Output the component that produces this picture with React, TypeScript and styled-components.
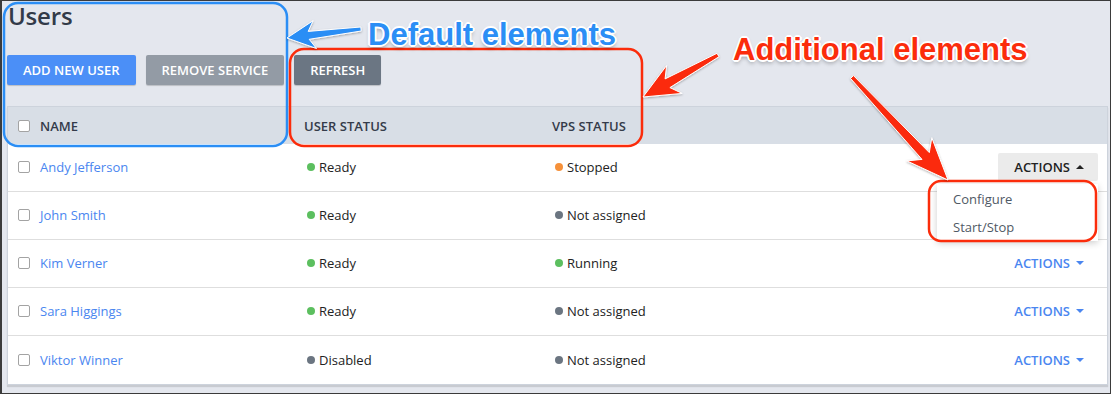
import React from 'react';
import styled, { createGlobalStyle, css } from 'styled-components';

const GlobalStyle = createGlobalStyle`
  html, body { margin: 0; padding: 0; background: #fff; }
  * { box-sizing: border-box; }
  body { font-family: "Open Sans", "Liberation Sans", sans-serif; }
`;

const Stage = styled.div`
  position: relative;
  width: 1113px;
  height: 395px;
  overflow: hidden;
`;

const Frame = styled.div`
  width: 1111px;
  height: 394px;
  background: #e4e7ee;
  border: 1px solid #3b3b3b;
  border-left-width: 2px;
  padding: 0 2px 0 5px;
  display: flex;
  flex-direction: column;
`;

const Title = styled.h1`
  margin: 1px 0 0 1px;
  font: 600 24px/27px "Open Sans", sans-serif;
  color: #323a48;
  letter-spacing: -0.2px;
`;

const Toolbar = styled.div`
  display: flex;
  gap: 10px;
  margin-top: 26px;
`;

type Variant = 'primary' | 'muted' | 'dark';
const btnBg: Record<Variant, string> = {
  primary: '#4b8ff7',
  muted: '#939ba5',
  dark: '#6b7683',
};

const Button = styled.button<{ $variant: Variant }>`
  height: 30px;
  padding: 0 16px;
  border: none;
  border-radius: 2px;
  background: ${(p) => btnBg[p.$variant]};
  color: #fff;
  font: 600 13px/30px "Open Sans", sans-serif;
  box-shadow: 0 1px 1px rgba(0, 0, 0, 0.18);
`;

const Table = styled.div`
  margin-top: 21px;
  background: #fff;
  border: 1px solid #cdd3dc;
  box-shadow: 0 2px 1px rgba(0, 0, 0, 0.12);
`;

const RowGrid = css`
  display: grid;
  grid-template-columns: 22px 264px 248px 1fr;
  align-items: center;
  padding: 0 9px 0 10px;
`;

const HeadRow = styled.div`
  ${RowGrid};
  height: 37px;
  background: #d8dee6;
  font: 600 13px "Open Sans", sans-serif;
  color: #343b4a;
`;

const Row = styled.div`
  ${RowGrid};
  height: 48px;
  padding-bottom: 1px;
  border-bottom: 1px solid #dedede;
  font: 400 13px "Open Sans", sans-serif;
  color: #222;
  &:last-child { border-bottom: none; }
`;

const Check = styled.span`
  display: block;
  width: 12px;
  height: 12px;
  border: 1px solid #a3a3a3;
  border-radius: 2px;
  background: #fff;
`;

const NameLink = styled.span`
  color: #4a86f0;
`;

const Status = styled.span`
  display: flex;
  align-items: center;
`;

const VpsCell = styled.div`
  display: flex;
  align-items: center;
  justify-content: space-between;
`;

const Dot = styled.span<{ $color: string }>`
  width: 8px;
  height: 8px;
  border-radius: 50%;
  background: ${(p) => p.$color};
  margin: 0 4px 0 3px;
`;

const ActionsCell = styled.div`
  position: relative;
`;

const ActionsButton = styled.button<{ $open?: boolean }>`
  height: 28px;
  display: flex;
  align-items: center;
  gap: 6px;
  padding: 0 14px 0 16px;
  border: none;
  border-radius: 2px;
  background: ${(p) => (p.$open ? '#ebebeb' : 'transparent')};
  color: ${(p) => (p.$open ? '#222' : '#4a86f0')};
  font: 600 13px "Open Sans", sans-serif;
`;

const Caret = styled.span<{ $up?: boolean }>`
  width: 0;
  height: 0;
  border-left: 4px solid transparent;
  border-right: 4px solid transparent;
  ${(p) =>
    p.$up
      ? css`border-bottom: 4px solid currentColor;`
      : css`border-top: 4px solid currentColor;`}
`;

const Menu = styled.div`
  position: absolute;
  top: calc(100% + 3px);
  right: 0;
  width: 161px;
  padding-top: 1px;
  background: #fff;
  box-shadow: 0 2px 7px rgba(0, 0, 0, 0.2);
  z-index: 2;
`;

const MenuItem = styled.div`
  height: 28px;
  padding-left: 16px;
  font: 400 13px/28px "Open Sans", sans-serif;
  color: #4f5965;
`;

const Overlay = styled.div`
  position: absolute;
  inset: 0;
  pointer-events: none;
  z-index: 5;
`;

const Label = styled.div<{ $color: string; $x: number; $y: number }>`
  position: absolute;
  left: ${(p) => p.$x}px;
  top: ${(p) => p.$y}px;
  font: 700 31px/31px "Liberation Sans", Arial, sans-serif;
  color: ${(p) => p.$color};
  white-space: nowrap;
  text-shadow: 1px 1px 0 #fff, -1px -1px 0 #fff, 1px -1px 0 #fff, -1px 1px 0 #fff,
    0 2px 0 #fff, 2px 0 0 #fff, -2px 0 0 #fff, 0 -2px 0 #fff, 0 3px 4px rgba(0, 0, 0, 0.35);
`;

function arrowPoints(
  x1: number, y1: number, x2: number, y2: number,
  tw: number, sw: number, hl: number, hh: number
) {
  const dx = x2 - x1, dy = y2 - y1, L = Math.hypot(dx, dy);
  const ux = dx / L, uy = dy / L, nx = -uy, ny = ux;
  const bx = x2 - ux * hl * 0.78, by = y2 - uy * hl * 0.78;
  const wx = x2 - ux * hl, wy = y2 - uy * hl;
  const p = [
    [x1 + (nx * tw) / 2, y1 + (ny * tw) / 2],
    [bx + (nx * sw) / 2, by + (ny * sw) / 2],
    [wx + nx * hh, wy + ny * hh],
    [x2, y2],
    [wx - nx * hh, wy - ny * hh],
    [bx - (nx * sw) / 2, by - (ny * sw) / 2],
    [x1 - (nx * tw) / 2, y1 - (ny * tw) / 2],
  ];
  return p.map(([a, b]) => `${a.toFixed(1)},${b.toFixed(1)}`).join(' ');
}

type U = { name: string; user: 'Ready' | 'Disabled'; vps: 'Stopped' | 'Not assigned' | 'Running' };
const users: U[] = [
  { name: 'Andy Jefferson', user: 'Ready', vps: 'Stopped' },
  { name: 'John Smith', user: 'Ready', vps: 'Not assigned' },
  { name: 'Kim Verner', user: 'Ready', vps: 'Running' },
  { name: 'Sara Higgings', user: 'Ready', vps: 'Not assigned' },
  { name: 'Viktor Winner', user: 'Disabled', vps: 'Not assigned' },
];

const dotColor: Record<string, string> = {
  Ready: '#5cbf5f',
  Running: '#5cbf5f',
  Disabled: '#6b7581',
  'Not assigned': '#6b7581',
  Stopped: '#f6913a',
};

export default function App() {
  const BLUE = '#2b8ef5';
  const RED = '#fb2c0b';
  return (
    <Stage>
      <GlobalStyle />
      <Frame>
        <Title>Users</Title>
        <Toolbar>
          <Button $variant="primary">ADD NEW USER</Button>
          <Button $variant="muted">REMOVE SERVICE</Button>
          <Button $variant="dark">REFRESH</Button>
        </Toolbar>
        <Table>
          <HeadRow>
            <Check />
            <span>NAME</span>
            <span>USER STATUS</span>
            <span>VPS STATUS</span>
          </HeadRow>
          {users.map((u, i) => (
            <Row key={u.name}>
              <Check />
              <NameLink>{u.name}</NameLink>
              <Status>
                <Dot $color={dotColor[u.user]} />
                {u.user}
              </Status>
              <VpsCell>
                <Status>
                  <Dot $color={dotColor[u.vps]} />
                  {u.vps}
                </Status>
                <ActionsCell>
                  <ActionsButton $open={i === 0}>
                    ACTIONS
                    <Caret $up={i === 0} />
                  </ActionsButton>
                  {i === 0 && (
                    <Menu>
                      <MenuItem>Configure</MenuItem>
                      <MenuItem>Start/Stop</MenuItem>
                    </Menu>
                  )}
                </ActionsCell>
              </VpsCell>
            </Row>
          ))}
        </Table>
      </Frame>
      <Overlay>
        <svg width="1113" height="395" viewBox="0 0 1113 395">
          <defs>
            <filter id="sh" x="-10%" y="-10%" width="120%" height="120%">
              <feDropShadow dx="0" dy="1" stdDeviation="1" floodColor="#000" floodOpacity="0.3" />
            </filter>
          </defs>
          <rect x="4" y="3" width="283" height="143" rx="14" fill="none" stroke={BLUE} strokeWidth="2.5" />
          <rect x="290" y="49" width="352" height="97" rx="14" fill="none" stroke={RED} strokeWidth="2.5" />
          <rect x="929" y="181" width="167" height="60" rx="12" fill="none" stroke={RED} strokeWidth="2.5" />
          <polygon filter="url(#sh)" points={arrowPoints(361, 29, 287, 38, 4, 8, 28, 14)} fill={BLUE} stroke="#fff" strokeWidth="1" strokeLinejoin="round" />
          <polygon filter="url(#sh)" points={arrowPoints(718, 55, 643, 97, 4, 10, 36, 16)} fill={RED} stroke="#fff" strokeWidth="1" strokeLinejoin="round" />
          <polygon filter="url(#sh)" points={arrowPoints(852, 77, 948, 180, 4, 10, 42, 17)} fill={RED} stroke="#fff" strokeWidth="1" strokeLinejoin="round" />
        </svg>
        <Label $color={BLUE} $x={368} $y={19}>Default elements</Label>
        <Label $color={RED} $x={733} $y={34}>Additional elements</Label>
      </Overlay>
    </Stage>
  );
}
